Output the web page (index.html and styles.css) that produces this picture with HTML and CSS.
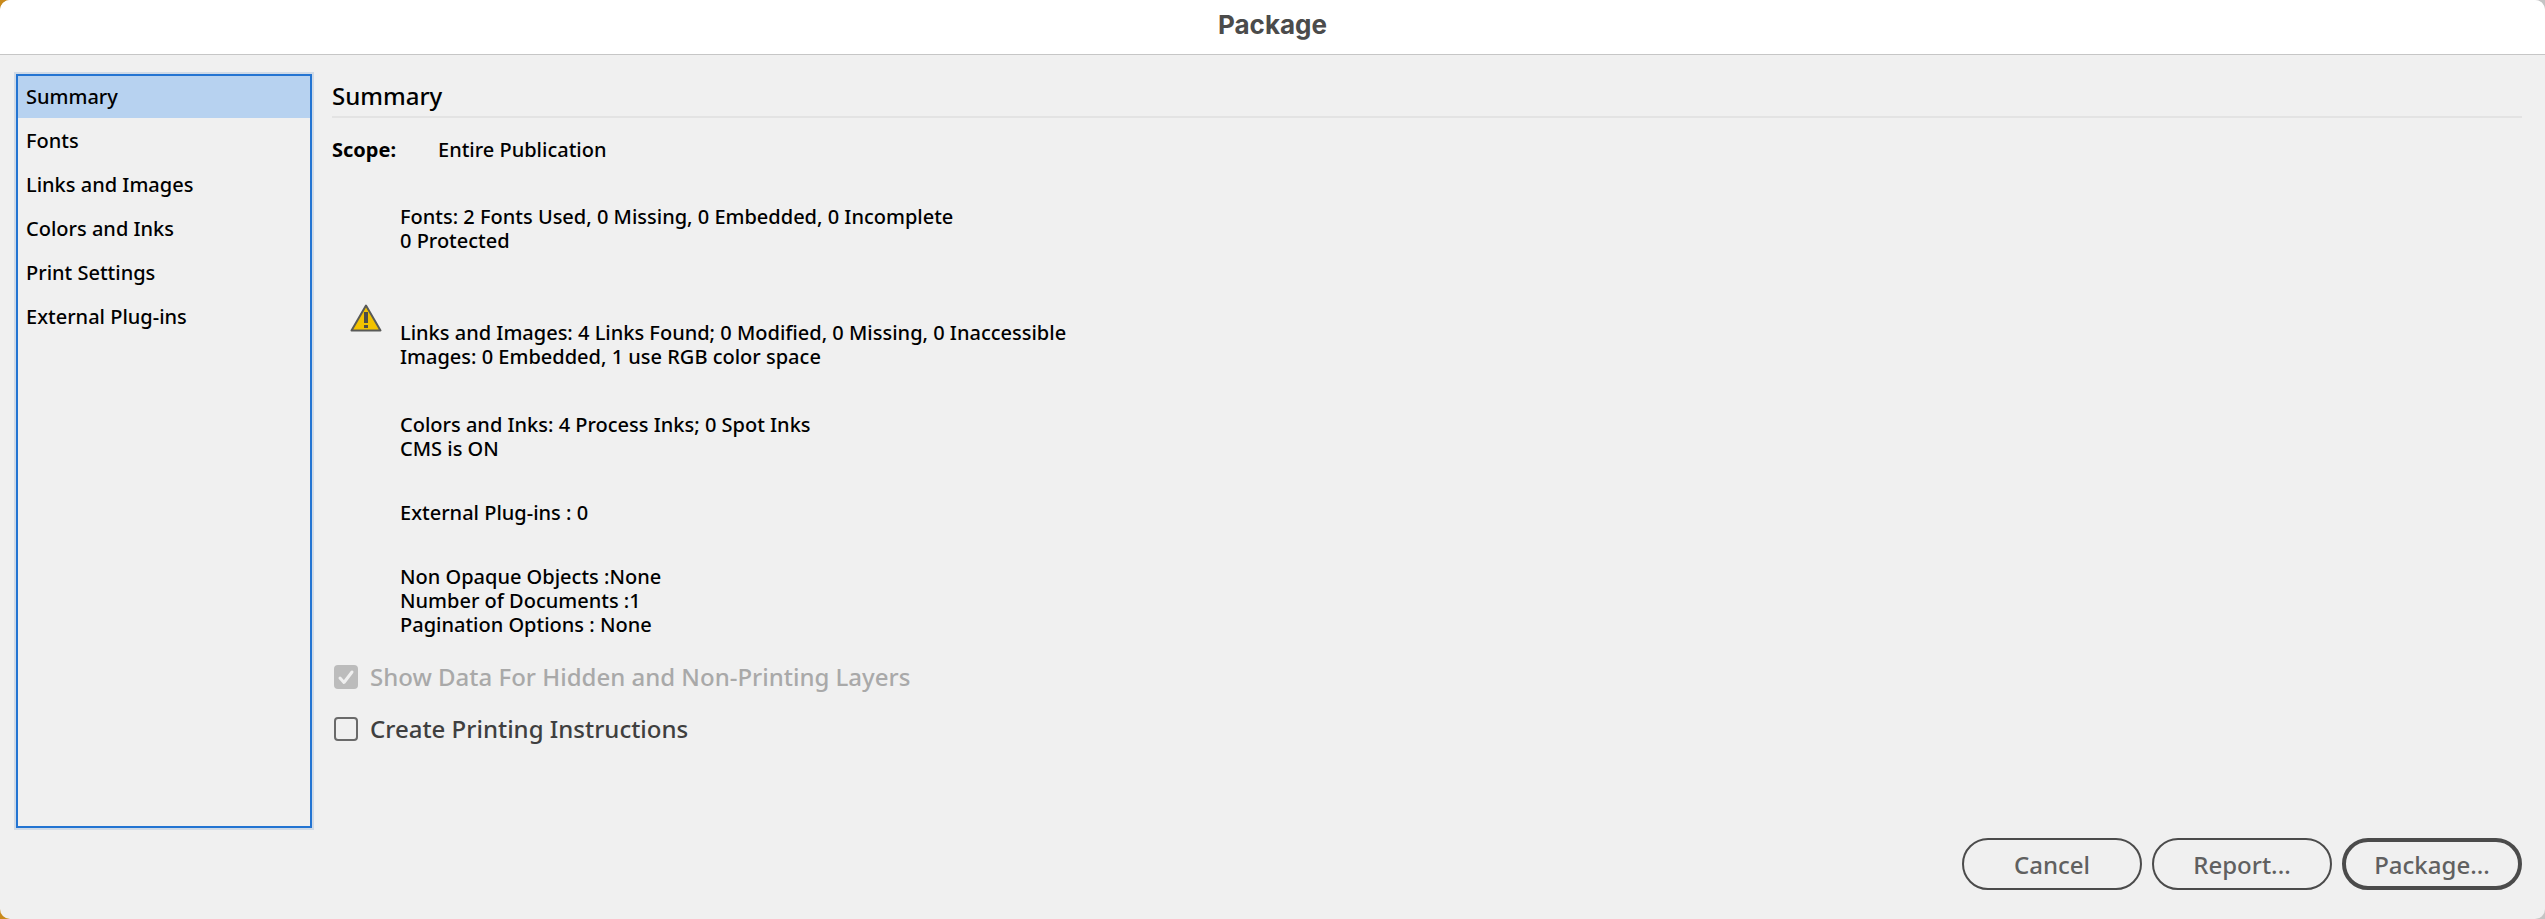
FILE: index.html
```html
<!DOCTYPE html>
<html lang="en">
<head>
  <meta charset="UTF-8" />
  <title>Package</title>
  <link rel="stylesheet" href="styles.css">
</head>
<body>

  <div class="dialog">
    <header class="title-bar">
      <h1>Package</h1>
    </header>

    <div class="dialog-body">
      <nav class="sidebar">
        <a href="#summary" class="active">Summary</a>
        <a href="#fonts">Fonts</a>
        <a href="#links">Links and Images</a>
        <a href="#colors">Colors and Inks</a>
        <a href="#print">Print Settings</a>
        <a href="#plugins">External Plug-ins</a>
      </nav>

      <main class="content" id="summary">
        <h2>Summary</h2>

        <div class="scope">
          <strong>Scope:</strong>
          <span>Entire Publication</span>
        </div>

        <div class="report">
          <p class="fonts">Fonts: 2 Fonts Used, 0 Missing, 0 Embedded, 0 Incomplete<br>0 Protected</p>

          <div class="links">
            <svg class="warning" viewBox="0 0 32 28" role="img" aria-label="Warning">
              <path d="M16 1.500 L30.500 26.500 H1.500 Z" fill="#f2c200" stroke="#595a58" stroke-width="2" stroke-linejoin="round" />
              <rect x="14" y="8" width="4" height="11" fill="#4d4d48" />
              <rect x="14" y="21" width="4" height="3" fill="#4d4d48" />
            </svg>
            <p>Links and Images: 4 Links Found; 0 Modified, 0 Missing, 0 Inaccessible<br>Images: 0 Embedded, 1 use RGB color space</p>
          </div>

          <p>Colors and Inks: 4 Process Inks; 0 Spot Inks<br>CMS is ON</p>
          <p>External Plug-ins : 0</p>
          <p>Non Opaque Objects :None<br>Number of Documents :1<br>Pagination Options : None</p>
        </div>

        <div class="options">
          <label class="option disabled">
            <input type="checkbox" checked disabled>
            <svg class="check" viewBox="0 0 24 24">
              <path d="M6 13 L10 17.500 L18 7" fill="none" stroke="#f0f0f0" stroke-width="3" stroke-linecap="round" stroke-linejoin="round" />
            </svg>
            <span>Show Data For Hidden and Non-Printing Layers</span>
          </label>
          <label class="option">
            <input type="checkbox">
            <span>Create Printing Instructions</span>
          </label>
        </div>
      </main>
    </div>

    <footer class="btn-container">
      <button type="button" class="btn">Cancel</button>
      <button type="button" class="btn">Report...</button>
      <button type="button" class="btn btn-default">Package...</button>
    </footer>
  </div>

</body>
</html>
```
FILE: styles.css
```css
* {
  box-sizing: border-box;
}

body {
  margin: 0;
  font-family: "Noto Sans", "Open Sans", sans-serif;
  font-size: 20px;
  font-weight: 500;
  line-height: 24px;
  color: #000;
  background: linear-gradient(to right, #c98a1c, #c4c4c4 50%);
}

.dialog {
  display: flex;
  flex-direction: column;
  min-height: 100vh;
  background-color: #f0f0f0;
  border-radius: 10px;
  overflow: hidden;
}

.title-bar {
  height: 55px;
  padding-top: 9px;
  background-color: #fff;
  border-bottom: 1px solid #c6c6c6;
  text-align: center;
}

.title-bar h1 {
  margin: 0;
  font-family: Inter, sans-serif;
  font-size: 26px;
  font-weight: 700;
  line-height: 32px;
  color: #4b4b4b;
}

.dialog-body {
  display: flex;
  flex: 1;
  gap: 20px;
  padding: 19px 23px 10px 16px;
}

.sidebar {
  width: 296px;
  outline: 2px solid #2374d2;
  outline-offset: -2px;
  box-shadow: 0 0 0 2px #d0dae6;
}

.sidebar a {
  display: block;
  padding: 11px 10px 9px;
  color: #000;
  text-decoration: none;
}

.sidebar a.active {
  background-color: #b7d2f0;
}

.content {
  flex: 1;
}

.content h2 {
  margin: 0;
  padding: 6px 0 4px;
  border-bottom: 2px solid #e3e3e3;
  font-size: 24px;
  font-weight: 500;
  line-height: 32px;
}

.scope {
  display: flex;
  padding-top: 20px;
}

.scope strong {
  width: 106px;
}

.report {
  display: flex;
  flex-direction: column;
  gap: 40px;
  padding: 43px 0 0 68px;
}

.report p {
  margin: 0;
}

.report .fonts {
  margin-bottom: 12px;
}

.links {
  position: relative;
  padding: 16px 0 4px;
}

.warning {
  position: absolute;
  top: -1px;
  left: -50px;
  width: 32px;
  height: 28px;
}

.options {
  display: flex;
  flex-direction: column;
  gap: 20px;
  padding: 24px 0 0 2px;
}

.option {
  position: relative;
  display: flex;
  align-items: center;
  gap: 12px;
  font-size: 24px;
  line-height: 32px;
  color: #3f3f3f;
}

.option input {
  appearance: none;
  width: 24px;
  height: 24px;
  margin: 0;
  border: 2px solid #6a6a6a;
  border-radius: 4px;
}

.option.disabled {
  color: #a9a9a9;
}

.option.disabled input {
  border: none;
  background-color: #bcbcbc;
}

.check {
  position: absolute;
  top: 4px;
  left: 0;
  width: 24px;
  height: 24px;
}

.btn-container {
  display: flex;
  justify-content: flex-end;
  gap: 10px;
  padding: 0 23px 29px;
}

.btn {
  width: 180px;
  height: 52px;
  padding: 0;
  border: 2px solid #4b4b4b;
  border-radius: 26px;
  background: none;
  font-family: inherit;
  font-size: 24px;
  font-weight: 500;
  color: #606060;
}

.btn-default {
  border-width: 4px;
}
```
